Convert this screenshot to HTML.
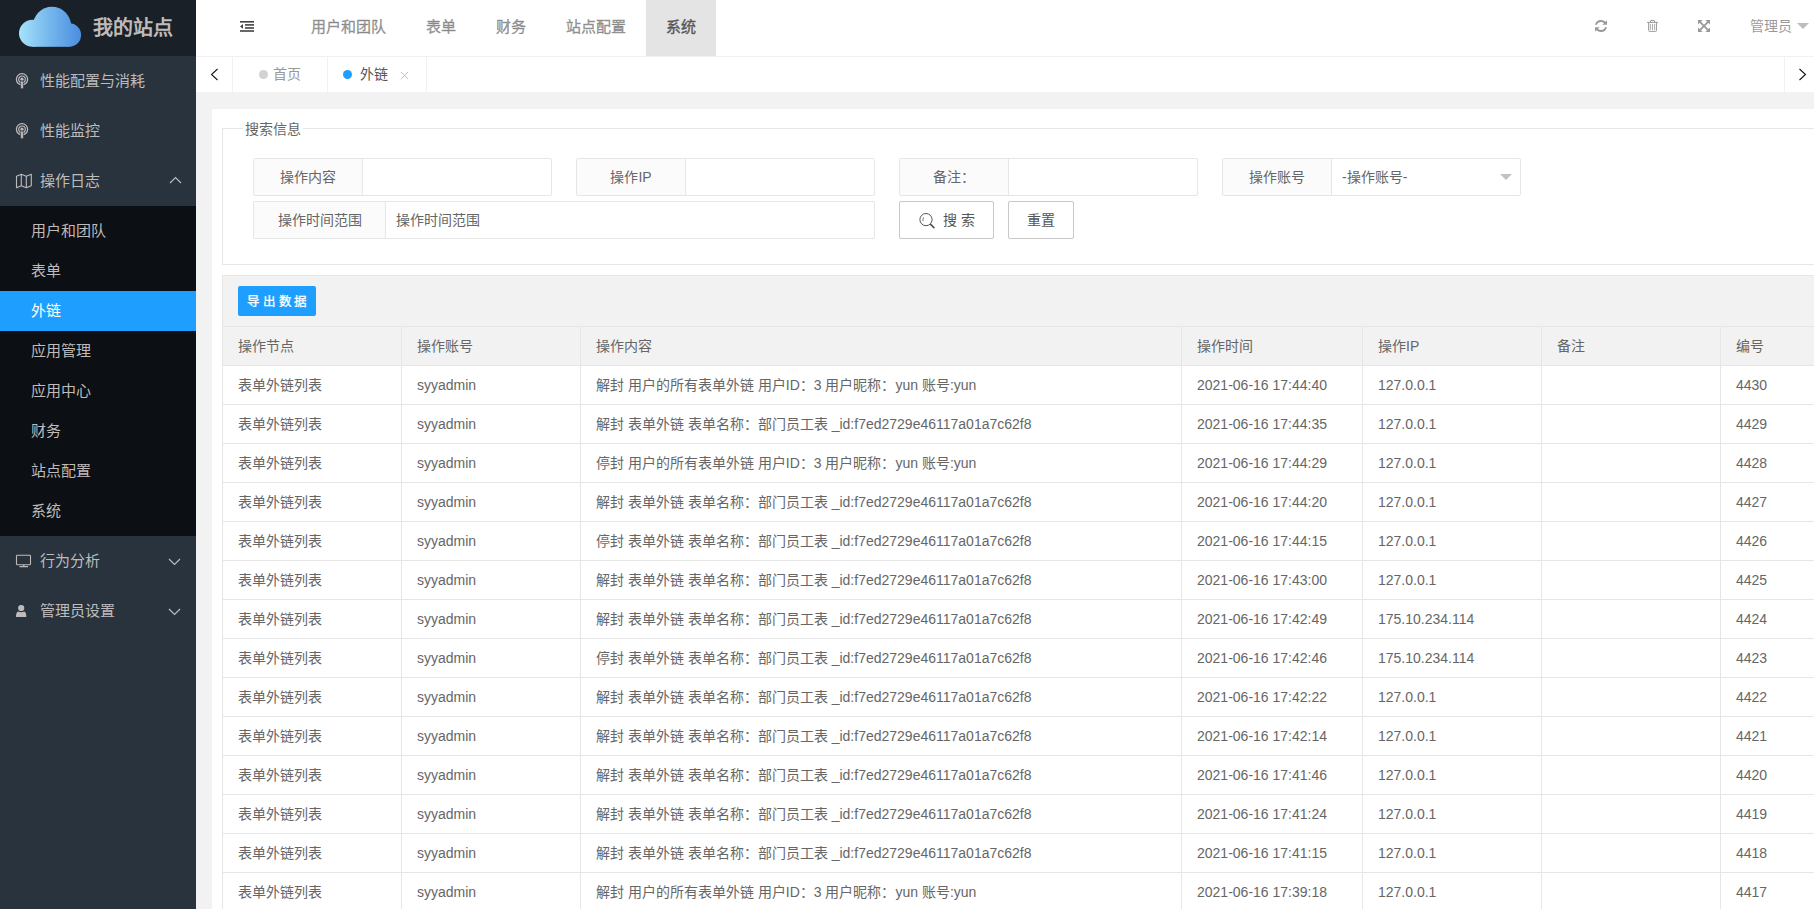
<!DOCTYPE html>
<html lang="zh-CN">
<head>
<meta charset="utf-8">
<style>
*{box-sizing:border-box;margin:0;padding:0}
html,body{width:1814px;height:909px;overflow:hidden}
body{position:relative;background:#f2f2f2;font-family:"Liberation Sans",sans-serif;font-size:14px;color:#666}
.abs{position:absolute}
#logo{left:0;top:0;width:196px;height:56px;background:#192027}
#logo .t{left:93px;top:0;line-height:56px;font-size:20px;font-weight:bold;color:rgb(191,187,187);white-space:nowrap}
#side{left:0;top:56px;width:196px;height:853px;background:#28333E}
.mi{position:absolute;left:0;width:196px;height:50px;line-height:50px;font-size:15px;color:rgb(191,187,187)}
.mi .tx{position:absolute;left:40px;top:0}
.mi svg{position:absolute}
#child{left:0;top:206px;width:196px;height:330px;background:#0c0f13}
.ci{position:absolute;left:0;width:196px;height:40px;line-height:40px;font-size:15px;color:rgb(191,187,187)}
.ci .tx{position:absolute;left:31px;top:0}
.ci.on{background:#1E9FFF;color:#fff}
#header{left:196px;top:0;width:1618px;height:56px;background:#fff}
.nv{position:absolute;top:0;height:56px;line-height:53px;font-size:15px;color:rgba(107,107,107,0.7);-webkit-text-stroke:0.35px rgba(107,107,107,0.7);padding:0 20px;white-space:nowrap}
.nv.on{background:#e4e4e4;color:#565656;-webkit-text-stroke:0.35px #565656}
#tabs{left:196px;top:56px;width:1618px;height:36px;background:#fff;border-top:1px solid #f1f1f1}
.tb{position:absolute;top:0;height:35px;border-right:1px solid #f1f1f1}
#card{left:212px;top:109px;width:1700px;height:900px;background:#fff;border-radius:2px}
#fs{left:222px;top:128px;width:1700px;height:137px;border:1px solid #e6e6e6}
#legend{left:243px;top:120px;padding:0 2px;background:#fff;line-height:18px;font-size:14px;color:#666}
.ig{position:absolute;height:38px;border:1px solid #e6e6e6;border-radius:2px;background:#fff}
.ig .lb{position:absolute;left:0;top:0;height:36px;line-height:36px;text-align:center;background:#fbfbfb;border-right:1px solid #e6e6e6;font-size:14px;color:#666;border-radius:2px 0 0 2px}
.ig .ph{position:absolute;top:0;height:36px;line-height:36px;font-size:14px;color:#666;white-space:nowrap}
.btn{position:absolute;height:38px;line-height:36px;border:1px solid #c9c9c9;border-radius:2px;background:#fff;font-size:14px;color:#555;text-align:center;white-space:nowrap}
#tool{left:222px;top:275px;width:1700px;height:51px;background:#f2f2f2;border:1px solid #e6e6e6;border-bottom:none}
#exp{left:238px;top:286px;width:78px;height:30px;line-height:30px;background:#1E9FFF;color:#fff;border-radius:2px;font-size:12.5px;white-space:nowrap;-webkit-text-stroke:0.3px #fff}
#tbl{left:222px;top:326px;width:1700px;border-left:1px solid #e6e6e6}
.row{position:relative;height:39px;border-bottom:1px solid #e6e6e6;white-space:nowrap}
.row.h{background:#f2f2f2;border-top:1px solid #e6e6e6;height:40px}
.row.b{background:#fff}
.c{position:absolute;top:0;height:38px;line-height:38px;padding-left:15px;border-right:1px solid #e6e6e6;font-size:14px;color:#666;overflow:hidden}
.row.h .c{height:39px;line-height:39px}
</style>
</head>
<body>
<div id="logo" class="abs">
<svg class="abs" style="left:0;top:0" width="90" height="56" viewBox="0 0 90 56">
<defs><linearGradient id="cg" gradientUnits="userSpaceOnUse" x1="19" x2="81" y1="0" y2="0"><stop offset="0" stop-color="#a6e3fb"/><stop offset="0.5" stop-color="#74b6ec"/><stop offset="1" stop-color="#4b8de0"/></linearGradient></defs>
<g fill="url(#cg)"><circle cx="32.5" cy="33.3" r="13.5"/><circle cx="52" cy="26" r="19.2"/><circle cx="69.3" cy="35" r="11.8"/><rect x="32.5" y="26" width="36.8" height="20.8"/></g>
</svg>
<div class="abs t">我的站点</div>
</div>

<div id="side" class="abs">
<div class="mi" style="top:0"><svg style="left:15px;top:17px" width="14" height="16" viewBox="0 0 14 16"><circle cx="7" cy="6.3" r="5.6" fill="none" stroke="rgb(191,187,187)" stroke-width="1.3"/><circle cx="7" cy="6.3" r="3.3" fill="none" stroke="rgb(191,187,187)" stroke-width="1.2"/><circle cx="7" cy="6.2" r="1.6" fill="rgb(191,187,187)"/><rect x="5.6" y="8" width="2.8" height="7.8" rx="1.2" fill="rgb(191,187,187)" stroke="#28333E" stroke-width="0.6"/></svg><span class="tx">性能配置与消耗</span></div>
<div class="mi" style="top:50px"><svg style="left:15px;top:17px" width="14" height="16" viewBox="0 0 14 16"><circle cx="7" cy="6.3" r="5.6" fill="none" stroke="rgb(191,187,187)" stroke-width="1.3"/><circle cx="7" cy="6.3" r="3.3" fill="none" stroke="rgb(191,187,187)" stroke-width="1.2"/><circle cx="7" cy="6.2" r="1.6" fill="rgb(191,187,187)"/><rect x="5.6" y="8" width="2.8" height="7.8" rx="1.2" fill="rgb(191,187,187)" stroke="#28333E" stroke-width="0.6"/></svg><span class="tx">性能监控</span></div>
<div class="mi" style="top:100px"><svg style="left:15px;top:117px;top:17px" width="18" height="16" viewBox="0 0 18 16"><path d="M1.5 3.2 L6.3 1.3 L11.3 3.2 L16.3 1.3 L16.3 12.8 L11.3 14.7 L6.3 12.8 L1.5 14.7 Z M6.3 1.3 V12.8 M11.3 3.2 V14.7" fill="none" stroke="rgb(191,187,187)" stroke-width="1.1" stroke-linejoin="round"/></svg><span class="tx">操作日志</span><svg style="left:169px;top:20px" width="13" height="8" viewBox="0 0 13 8"><path d="M1 7 L6.5 1.5 L12 7" fill="none" stroke="rgb(191,187,187)" stroke-width="1.2"/></svg></div>
</div>
<div id="child" class="abs">
<div class="ci" style="top:5px"><span class="tx">用户和团队</span></div>
<div class="ci" style="top:45px"><span class="tx">表单</span></div>
<div class="ci on" style="top:85px"><span class="tx">外链</span></div>
<div class="ci" style="top:125px"><span class="tx">应用管理</span></div>
<div class="ci" style="top:165px"><span class="tx">应用中心</span></div>
<div class="ci" style="top:205px"><span class="tx">财务</span></div>
<div class="ci" style="top:245px"><span class="tx">站点配置</span></div>
<div class="ci" style="top:285px"><span class="tx">系统</span></div>
</div>
<div class="abs" style="left:0;top:536px;width:196px">
<div class="mi" style="top:0"><svg style="left:15px;top:18px" width="18" height="14" viewBox="0 0 18 14"><rect x="1.5" y="1.2" width="14" height="9.6" rx="0.8" fill="none" stroke="rgb(191,187,187)" stroke-width="1.1"/><path d="M8.75 11 V12.3 M4.5 12.6 H13" stroke="rgb(191,187,187)" stroke-width="1.2"/></svg><span class="tx">行为分析</span><svg style="left:168px;top:22px" width="13" height="8" viewBox="0 0 13 8"><path d="M1 1 L6.5 6.5 L12 1" fill="none" stroke="rgb(191,187,187)" stroke-width="1.2"/></svg></div>
<div class="mi" style="top:50px"><svg style="left:15px;top:18px" width="13" height="14" viewBox="0 0 13 14"><circle cx="6.2" cy="4" r="3.1" fill="rgb(191,187,187)"/><path d="M1 12.5 Q1 8.5 3 7.6 Q6.2 8.8 9.4 7.6 Q11.3 8.5 11.3 12.5 Q11.3 13 10.8 13 H1.5 Q1 13 1 12.5Z" fill="rgb(191,187,187)"/></svg><span class="tx">管理员设置</span><svg style="left:168px;top:22px" width="13" height="8" viewBox="0 0 13 8"><path d="M1 1 L6.5 6.5 L12 1" fill="none" stroke="rgb(191,187,187)" stroke-width="1.2"/></svg></div>
</div>

<div id="header" class="abs">
<svg class="abs" style="left:44px;top:21px" width="14" height="11" viewBox="0 0 14 11"><rect x="0" y="0" width="14" height="1.6" fill="#444"/><rect x="5" y="3.1" width="9" height="1.6" fill="#444"/><rect x="5" y="6.2" width="9" height="1.6" fill="#444"/><rect x="0" y="9.2" width="14" height="1.6" fill="#444"/><path d="M3 3.1 L0 5.4 L3 7.8Z" fill="#444"/></svg>
<div class="nv" style="left:95px">用户和团队</div>
<div class="nv" style="left:210px">表单</div>
<div class="nv" style="left:280px">财务</div>
<div class="nv" style="left:350px">站点配置</div>
<div class="nv on" style="left:450px">系统</div>
<svg class="abs" style="left:1399px;top:20px" width="12" height="12" viewBox="0 0 12 12"><path d="M0 4.7 Q1.1 0 6 0 Q8.6 0 10.3 1.7 L12 0.6 V4.8 H7.3 L9 3.3 Q7.8 2 6 2 Q2.9 2 2 4.7 Z M12 7.3 Q10.9 12 6 12 Q3.4 12 1.7 10.3 L0 11.4 V7.2 H4.7 L3 8.7 Q4.2 10 6 10 Q9.1 10 10 7.3 Z" fill="#999"/></svg>
<svg class="abs" style="left:1451px;top:20px" width="11" height="12" viewBox="0 0 11 12"><path d="M0.1 2.4 H10.9 M3.5 2.2 V1.0 Q3.5 0.5 4 0.5 H7 Q7.5 0.5 7.5 1 V2.2 M1.65 2.6 V10.6 Q1.65 11.35 2.4 11.35 H8.7 Q9.45 11.35 9.45 10.6 V2.6" fill="none" stroke="#999" stroke-width="1"/><path d="M3.4 4.3 V9.5 M5.5 4.3 V9.5 M7.6 4.3 V9.5" stroke="#999" stroke-width="0.8" stroke-linecap="round"/></svg>
<svg class="abs" style="left:1502px;top:20px" width="12" height="12" viewBox="0 0 12 12"><path d="M0 0 H4.6 L0 4.6Z M12 0 V4.6 L7.4 0Z M0 12 V7.4 L4.6 12Z M12 12 H7.4 L12 7.4Z" fill="#999"/><path d="M1.2 1.2 L10.8 10.8 M10.8 1.2 L1.2 10.8" stroke="#999" stroke-width="1.7"/></svg>
<div class="abs" style="left:1554px;top:0;line-height:53px;font-size:14px;color:rgba(107,107,107,0.7);white-space:nowrap">管理员</div>
<svg class="abs" style="left:1601px;top:23px" width="12" height="6" viewBox="0 0 12 6"><path d="M0 0 H12 L6 6Z" fill="rgba(160,160,160,0.7)"/></svg>
</div>

<div id="tabs" class="abs">
<div class="tb" style="left:0;width:37px"><svg class="abs" style="left:14px;top:11px" width="9" height="14" viewBox="0 0 9 14"><path d="M7.5 1 L1.5 6.5 L7.5 12" fill="none" stroke="#111" stroke-width="1.05"/></svg></div>
<div class="tb" style="left:37px;width:95px"><span class="abs" style="left:26px;top:13px;width:9px;height:9px;border-radius:50%;background:#d2d2d2"></span><span class="abs" style="left:40px;top:0;line-height:35px;font-size:14px;color:#999">首页</span></div>
<div class="tb" style="left:132px;width:99px"><span class="abs" style="left:15px;top:13px;width:9px;height:9px;border-radius:50%;background:#1e9fff"></span><span class="abs" style="left:32px;top:0;line-height:35px;font-size:14px;color:#555">外链</span><svg class="abs" style="left:72px;top:14px" width="9" height="9" viewBox="0 0 9 9"><path d="M0.8 0.8 L8.2 8.2 M8.2 0.8 L0.8 8.2" stroke="#c2c2c2" stroke-width="1"/></svg></div>
<div class="abs" style="left:1588px;top:0;width:30px;height:35px;border-left:1px solid #f1f1f1"><svg class="abs" style="left:13px;top:11px" width="9" height="14" viewBox="0 0 9 14"><path d="M1.5 1 L7.5 6.5 L1.5 12" fill="none" stroke="#111" stroke-width="1.05"/></svg></div>
</div>
<div id="card" class="abs"></div>
<div id="fs" class="abs"></div>
<div id="legend" class="abs">搜索信息</div>

<div class="ig" style="left:253px;top:158px;width:299px"><div class="lb" style="width:109px">操作内容</div></div>
<div class="ig" style="left:576px;top:158px;width:299px"><div class="lb" style="width:109px">操作IP</div></div>
<div class="ig" style="left:899px;top:158px;width:299px"><div class="lb" style="width:109px">备注：</div></div>
<div class="ig" style="left:1222px;top:158px;width:299px"><div class="lb" style="width:109px">操作账号</div><div class="ph" style="left:119px">-操作账号-</div><svg class="abs" style="left:277px;top:15px" width="12" height="6" viewBox="0 0 12 6"><path d="M0 0 H12 L6 6Z" fill="#c2c2c2"/></svg></div>
<div class="ig" style="left:253px;top:201px;width:622px"><div class="lb" style="width:132px">操作时间范围</div><div class="ph" style="left:142px">操作时间范围</div></div>
<div class="btn" style="left:899px;top:201px;width:95px"><svg class="abs" style="left:19px;top:11px" width="17" height="17" viewBox="0 0 17 17"><circle cx="7" cy="6.6" r="6.1" fill="none" stroke="#555" stroke-width="1"/><path d="M11.6 11.4 L14.9 14.7" stroke="#555" stroke-width="1.7" stroke-linecap="round"/><path d="M4.1 8.2 Q3.5 6 4.6 4.3" fill="none" stroke="#555" stroke-width="0.8"/></svg><span class="abs" style="left:43px;top:0;letter-spacing:4px">搜索</span></div>
<div class="btn" style="left:1008px;top:201px;width:66px">重置</div>

<div id="tool" class="abs"></div>
<div id="exp" class="abs"><span class="abs" style="left:9px;top:1px;letter-spacing:2.8px">导出数据</span></div>
<div id="tbl" class="abs">
<div class="row h"><div class="c" style="left:0px;width:179px">操作节点</div><div class="c" style="left:179px;width:179px">操作账号</div><div class="c" style="left:358px;width:601px">操作内容</div><div class="c" style="left:959px;width:181px">操作时间</div><div class="c" style="left:1140px;width:179px">操作IP</div><div class="c" style="left:1319px;width:179px">备注</div><div class="c" style="left:1498px;width:202px">编号</div></div>
<div class="row b"><div class="c" style="left:0px;width:179px">表单外链列表</div><div class="c" style="left:179px;width:179px">syyadmin</div><div class="c" style="left:358px;width:601px">解封 用户的所有表单外链 用户ID：3 用户昵称：yun 账号:yun</div><div class="c" style="left:959px;width:181px">2021-06-16 17:44:40</div><div class="c" style="left:1140px;width:179px">127.0.0.1</div><div class="c" style="left:1319px;width:179px"></div><div class="c" style="left:1498px;width:202px">4430</div></div>
<div class="row b"><div class="c" style="left:0px;width:179px">表单外链列表</div><div class="c" style="left:179px;width:179px">syyadmin</div><div class="c" style="left:358px;width:601px">解封 表单外链 表单名称：部门员工表 _id:f7ed2729e46117a01a7c62f8</div><div class="c" style="left:959px;width:181px">2021-06-16 17:44:35</div><div class="c" style="left:1140px;width:179px">127.0.0.1</div><div class="c" style="left:1319px;width:179px"></div><div class="c" style="left:1498px;width:202px">4429</div></div>
<div class="row b"><div class="c" style="left:0px;width:179px">表单外链列表</div><div class="c" style="left:179px;width:179px">syyadmin</div><div class="c" style="left:358px;width:601px">停封 用户的所有表单外链 用户ID：3 用户昵称：yun 账号:yun</div><div class="c" style="left:959px;width:181px">2021-06-16 17:44:29</div><div class="c" style="left:1140px;width:179px">127.0.0.1</div><div class="c" style="left:1319px;width:179px"></div><div class="c" style="left:1498px;width:202px">4428</div></div>
<div class="row b"><div class="c" style="left:0px;width:179px">表单外链列表</div><div class="c" style="left:179px;width:179px">syyadmin</div><div class="c" style="left:358px;width:601px">解封 表单外链 表单名称：部门员工表 _id:f7ed2729e46117a01a7c62f8</div><div class="c" style="left:959px;width:181px">2021-06-16 17:44:20</div><div class="c" style="left:1140px;width:179px">127.0.0.1</div><div class="c" style="left:1319px;width:179px"></div><div class="c" style="left:1498px;width:202px">4427</div></div>
<div class="row b"><div class="c" style="left:0px;width:179px">表单外链列表</div><div class="c" style="left:179px;width:179px">syyadmin</div><div class="c" style="left:358px;width:601px">停封 表单外链 表单名称：部门员工表 _id:f7ed2729e46117a01a7c62f8</div><div class="c" style="left:959px;width:181px">2021-06-16 17:44:15</div><div class="c" style="left:1140px;width:179px">127.0.0.1</div><div class="c" style="left:1319px;width:179px"></div><div class="c" style="left:1498px;width:202px">4426</div></div>
<div class="row b"><div class="c" style="left:0px;width:179px">表单外链列表</div><div class="c" style="left:179px;width:179px">syyadmin</div><div class="c" style="left:358px;width:601px">解封 表单外链 表单名称：部门员工表 _id:f7ed2729e46117a01a7c62f8</div><div class="c" style="left:959px;width:181px">2021-06-16 17:43:00</div><div class="c" style="left:1140px;width:179px">127.0.0.1</div><div class="c" style="left:1319px;width:179px"></div><div class="c" style="left:1498px;width:202px">4425</div></div>
<div class="row b"><div class="c" style="left:0px;width:179px">表单外链列表</div><div class="c" style="left:179px;width:179px">syyadmin</div><div class="c" style="left:358px;width:601px">解封 表单外链 表单名称：部门员工表 _id:f7ed2729e46117a01a7c62f8</div><div class="c" style="left:959px;width:181px">2021-06-16 17:42:49</div><div class="c" style="left:1140px;width:179px">175.10.234.114</div><div class="c" style="left:1319px;width:179px"></div><div class="c" style="left:1498px;width:202px">4424</div></div>
<div class="row b"><div class="c" style="left:0px;width:179px">表单外链列表</div><div class="c" style="left:179px;width:179px">syyadmin</div><div class="c" style="left:358px;width:601px">停封 表单外链 表单名称：部门员工表 _id:f7ed2729e46117a01a7c62f8</div><div class="c" style="left:959px;width:181px">2021-06-16 17:42:46</div><div class="c" style="left:1140px;width:179px">175.10.234.114</div><div class="c" style="left:1319px;width:179px"></div><div class="c" style="left:1498px;width:202px">4423</div></div>
<div class="row b"><div class="c" style="left:0px;width:179px">表单外链列表</div><div class="c" style="left:179px;width:179px">syyadmin</div><div class="c" style="left:358px;width:601px">解封 表单外链 表单名称：部门员工表 _id:f7ed2729e46117a01a7c62f8</div><div class="c" style="left:959px;width:181px">2021-06-16 17:42:22</div><div class="c" style="left:1140px;width:179px">127.0.0.1</div><div class="c" style="left:1319px;width:179px"></div><div class="c" style="left:1498px;width:202px">4422</div></div>
<div class="row b"><div class="c" style="left:0px;width:179px">表单外链列表</div><div class="c" style="left:179px;width:179px">syyadmin</div><div class="c" style="left:358px;width:601px">解封 表单外链 表单名称：部门员工表 _id:f7ed2729e46117a01a7c62f8</div><div class="c" style="left:959px;width:181px">2021-06-16 17:42:14</div><div class="c" style="left:1140px;width:179px">127.0.0.1</div><div class="c" style="left:1319px;width:179px"></div><div class="c" style="left:1498px;width:202px">4421</div></div>
<div class="row b"><div class="c" style="left:0px;width:179px">表单外链列表</div><div class="c" style="left:179px;width:179px">syyadmin</div><div class="c" style="left:358px;width:601px">解封 表单外链 表单名称：部门员工表 _id:f7ed2729e46117a01a7c62f8</div><div class="c" style="left:959px;width:181px">2021-06-16 17:41:46</div><div class="c" style="left:1140px;width:179px">127.0.0.1</div><div class="c" style="left:1319px;width:179px"></div><div class="c" style="left:1498px;width:202px">4420</div></div>
<div class="row b"><div class="c" style="left:0px;width:179px">表单外链列表</div><div class="c" style="left:179px;width:179px">syyadmin</div><div class="c" style="left:358px;width:601px">解封 表单外链 表单名称：部门员工表 _id:f7ed2729e46117a01a7c62f8</div><div class="c" style="left:959px;width:181px">2021-06-16 17:41:24</div><div class="c" style="left:1140px;width:179px">127.0.0.1</div><div class="c" style="left:1319px;width:179px"></div><div class="c" style="left:1498px;width:202px">4419</div></div>
<div class="row b"><div class="c" style="left:0px;width:179px">表单外链列表</div><div class="c" style="left:179px;width:179px">syyadmin</div><div class="c" style="left:358px;width:601px">解封 表单外链 表单名称：部门员工表 _id:f7ed2729e46117a01a7c62f8</div><div class="c" style="left:959px;width:181px">2021-06-16 17:41:15</div><div class="c" style="left:1140px;width:179px">127.0.0.1</div><div class="c" style="left:1319px;width:179px"></div><div class="c" style="left:1498px;width:202px">4418</div></div>
<div class="row b"><div class="c" style="left:0px;width:179px">表单外链列表</div><div class="c" style="left:179px;width:179px">syyadmin</div><div class="c" style="left:358px;width:601px">解封 用户的所有表单外链 用户ID：3 用户昵称：yun 账号:yun</div><div class="c" style="left:959px;width:181px">2021-06-16 17:39:18</div><div class="c" style="left:1140px;width:179px">127.0.0.1</div><div class="c" style="left:1319px;width:179px"></div><div class="c" style="left:1498px;width:202px">4417</div></div>
</div>
</body>
</html>
